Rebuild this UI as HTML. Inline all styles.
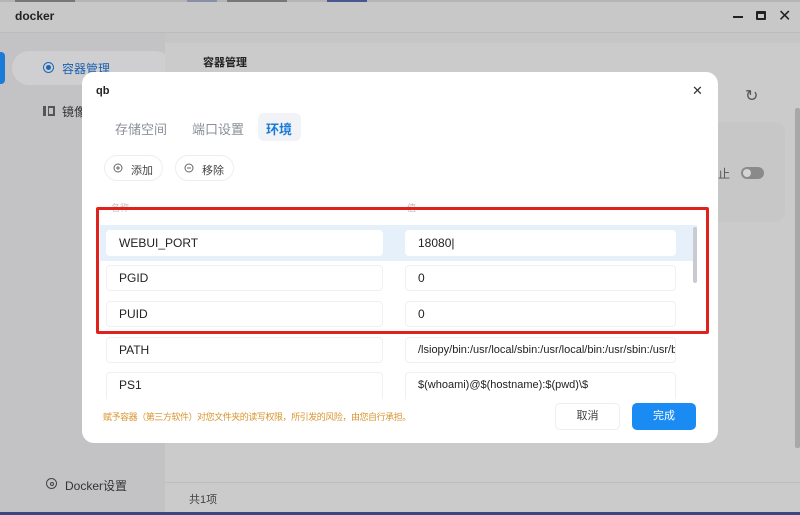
<!DOCTYPE html>
<html><head><meta charset="utf-8"><style>
*{box-sizing:border-box;margin:0;padding:0}
body{width:800px;height:515px;overflow:hidden;position:relative;background:#c9c9c9;font-family:"Liberation Sans","Noto Sans CJK SC",sans-serif;}
.abs{position:absolute}
.inp{position:absolute;height:26px;background:#fff;border:1px solid #eef0f3;border-radius:4px;font-size:12px;color:#222;line-height:24px;padding-left:12px;white-space:nowrap;overflow:hidden}
</style></head><body>
<div class="abs" style="left:0;top:0;width:800px;height:3px;background:#b5b5b5"></div>
<div class="abs" style="left:15px;top:0;width:60px;height:2px;background:#777"></div>
<div class="abs" style="left:187px;top:0;width:30px;height:2px;background:#8890a8"></div>
<div class="abs" style="left:227px;top:0;width:60px;height:2px;background:#777"></div>
<div class="abs" style="left:327px;top:0;width:40px;height:2px;background:#4a5690"></div>
<div class="abs" style="left:0;top:2px;width:800px;height:31px;background:#c8c8c8;border-bottom:1px solid #bcbcbc"></div>
<div class="abs" style="left:15px;top:9px;font-size:12px;font-weight:bold;color:#222">docker</div>
<div class="abs" style="left:733px;top:16px;width:10px;height:2px;background:#222"></div>
<div class="abs" style="left:756px;top:11px;width:10px;height:9px;border:2px solid #222;border-top-width:3px;border-radius:1px"></div>
<div class="abs" style="left:778px;top:6px;font-size:16px;color:#222">✕</div>
<div class="abs" style="left:0;top:33px;width:165px;height:482px;background:#c3c3c5"></div>
<div class="abs" style="left:0;top:52px;width:5px;height:32px;background:#1a7ad8;border-radius:0 4px 4px 0"></div>
<div class="abs" style="left:12px;top:51px;width:160px;height:34px;background:#cfcfd1;border-radius:17px"></div>
<div class="abs" style="left:43px;top:62px;width:11px;height:11px;border:1.5px solid #1a66b8;border-radius:50%"></div>
<div class="abs" style="left:46px;top:65px;width:5px;height:5px;background:#1a66b8;border-radius:50%"></div>
<div class="abs" style="left:62px;top:60px;font-size:12px;color:#1a5fae">容器管理</div>
<div class="abs" style="left:43px;top:106px;width:3px;height:10px;background:#555"></div>
<div class="abs" style="left:48px;top:106px;width:7px;height:10px;border:2px solid #555;border-left-width:1px"></div>
<div class="abs" style="left:62px;top:103px;font-size:12px;color:#333">镜像</div>
<div class="abs" style="left:46px;top:478px;width:11px;height:11px;border:1.5px solid #444;border-radius:50%"></div>
<div class="abs" style="left:49.5px;top:481.5px;width:4px;height:4px;border:1px solid #444;border-radius:50%"></div>
<div class="abs" style="left:65px;top:477px;font-size:12px;color:#333">Docker设置</div>
<div class="abs" style="left:165px;top:33px;width:635px;height:482px;background:#cbcbcb"></div>
<div class="abs" style="left:165px;top:33px;width:635px;height:10px;background:#c6c6c6"></div>
<div class="abs" style="left:203px;top:54px;font-size:11px;font-weight:bold;color:#222">容器管理</div>
<div class="abs" style="left:745px;top:86px;font-size:16px;color:#555">↻</div>
<div class="abs" style="left:710px;top:122px;width:75px;height:100px;background:#c7c7c7;border-radius:10px"></div>
<div class="abs" style="left:718px;top:165px;font-size:12px;color:#555">止</div>
<div class="abs" style="left:741px;top:167px;width:23px;height:12px;background:#8a8a8a;border-radius:6px"></div>
<div class="abs" style="left:743px;top:169px;width:8px;height:8px;background:#d4d4d4;border-radius:50%"></div>
<div class="abs" style="left:795px;top:108px;width:5px;height:340px;background:#a8a8a8;border-radius:2px"></div>
<div class="abs" style="left:165px;top:482px;width:635px;height:1px;background:#bdbdbd"></div>
<div class="abs" style="left:189px;top:491px;font-size:11px;color:#444">共1项</div>
<div class="abs" style="left:0;top:512px;width:800px;height:3px;background:#3a4a80"></div>
<div class="abs" style="left:82px;top:72px;width:636px;height:371px;background:#fff;border-radius:12px"></div>
<div class="abs" style="left:96px;top:85px;font-size:11px;font-weight:bold;color:#222">qb</div>
<div class="abs" style="left:692px;top:83px;font-size:13px;color:#333">✕</div>
<div class="abs" style="left:115px;top:119px;font-size:13px;color:#8a8f99">存储空间</div>
<div class="abs" style="left:192px;top:119px;font-size:13px;color:#8a8f99">端口设置</div>
<div class="abs" style="left:258px;top:113px;width:43px;height:28px;background:#f1f3f6;border-radius:6px"></div>
<div class="abs" style="left:266px;top:119px;font-size:13px;font-weight:bold;color:#1a7ad8">环境</div>
<div class="abs" style="left:104px;top:155px;width:59px;height:26px;border:1px solid #eceef1;border-radius:13px"></div>
<svg class="abs" style="left:113px;top:163px" width="10" height="10" viewBox="0 0 10 10"><circle cx="5" cy="5" r="4" fill="none" stroke="#666"/><path d="M5 3v4M3 5h4" stroke="#666"/></svg>
<div class="abs" style="left:131px;top:162px;font-size:11px;color:#444">添加</div>
<div class="abs" style="left:175px;top:155px;width:59px;height:26px;border:1px solid #eceef1;border-radius:13px"></div>
<svg class="abs" style="left:184px;top:163px" width="10" height="10" viewBox="0 0 10 10"><circle cx="5" cy="5" r="4" fill="none" stroke="#666"/><path d="M3 5h4" stroke="#666"/></svg>
<div class="abs" style="left:202px;top:162px;font-size:11px;color:#444">移除</div>
<div class="abs" style="left:111px;top:201px;font-size:9px;color:#bbb">名称</div>
<div class="abs" style="left:407px;top:201px;font-size:9px;color:#bbb">值</div>
<div class="abs" style="left:100px;top:225px;width:597px;height:36px;background:#e6f0fb"></div>
<div class="abs" style="left:693px;top:227px;width:4px;height:56px;background:#c8ccd2;border-radius:2px"></div>
<div class="inp" style="left:106px;top:230px;width:277px;border-color:#fff">WEBUI_PORT</div>
<div class="inp" style="left:405px;top:230px;width:271px;border-color:#fff">18080|</div>
<div class="inp" style="left:106px;top:265px;width:277px">PGID</div>
<div class="inp" style="left:405px;top:265px;width:271px">0</div>
<div class="inp" style="left:106px;top:301px;width:277px">PUID</div>
<div class="inp" style="left:405px;top:301px;width:271px">0</div>
<div class="inp" style="left:106px;top:337px;width:277px">PATH</div>
<div class="inp" style="left:405px;top:337px;width:271px;font-size:11px">/lsiopy/bin:/usr/local/sbin:/usr/local/bin:/usr/sbin:/usr/bin:/sbin</div>
<div class="abs" style="left:100px;top:372px;width:590px;height:27px;overflow:hidden">
<div class="inp" style="left:6px;top:0;width:277px;height:30px">PS1</div>
<div class="inp" style="left:305px;top:0;width:271px;height:30px;font-size:11px">$(whoami)@$(hostname):$(pwd)\$</div>
</div>
<div class="abs" style="left:96px;top:207px;width:613px;height:127px;border:3px solid #e0221c;border-radius:2px"></div>
<div class="abs" style="left:103px;top:410px;font-size:9px;letter-spacing:-0.45px;color:#d9942f">赋予容器（第三方软件）对您文件夹的读写权限，所引发的风险，由您自行承担。</div>
<div class="abs" style="left:555px;top:403px;width:65px;height:27px;border:1px solid #eceef1;border-radius:5px;font-size:11px;color:#444;text-align:center;line-height:25px">取消</div>
<div class="abs" style="left:632px;top:403px;width:64px;height:27px;background:#1a8bf2;border-radius:5px;font-size:11px;color:#fff;text-align:center;line-height:27px">完成</div>
</body></html>
